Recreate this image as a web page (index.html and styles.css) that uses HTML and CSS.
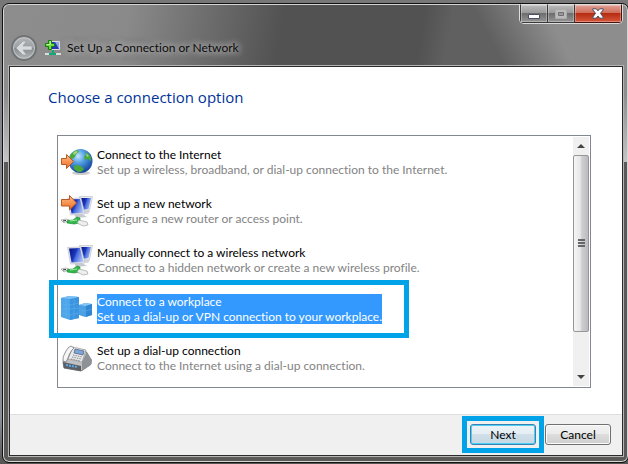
FILE: index.html
```html
<!DOCTYPE html>
<html lang="en">
<head>
  <meta charset="UTF-8">
  <meta name="viewport" content="width=device-width, initial-scale=1.0">
  <title>Set Up a Connection or Network</title>
  <link rel="stylesheet" href="styles.css">
</head>
<body>
  <div class="window">
    <header class="titlebar">
      <button class="back" type="button" aria-label="Back">
        <svg width="18" height="16" viewBox="0 0 18 16"><path d="M1 8 8 1h3.500L8 6h9v4H8l3.500 5H8z" fill="#d8dadc" stroke="#94989b" stroke-width=".6"/></svg>
      </button>
      <svg class="app-icon" width="16" height="18" viewBox="0 0 16 18">
        <path d="M5 2h10v9H5z" fill="#f2f2f2" stroke="#999" stroke-width=".5"/>
        <path d="M6 3h8v7H6z" fill="#2536b8"/>
        <path d="M10 3h4v7z" fill="#8fa6ee"/>
        <path d="M0 14h16v2H0z" fill="#d9e0dc"/>
        <path d="M4 14h7v2H4zM7 11h2v4H7z" fill="#12a878"/>
        <path d="M3.500 1.500h3v3h3v3h-3v3h-3v-3h-3v-3h3z" fill="#6fdc3f" stroke="#157a10"/>
        <path d="M4.500 2.500h1v3h-4" fill="none" stroke="#b9f29a"/>
      </svg>
      <h1 class="title">Set Up a Connection or Network</h1>
      <div class="caption">
        <button class="min" type="button" aria-label="Minimize">
          <svg width="14" height="8" viewBox="0 0 14 8"><path d="M1.500 2.500h11v4h-11z" fill="#fff" stroke="#4c5062"/></svg>
        </button>
        <button class="max" type="button" aria-label="Maximize" disabled>
          <svg width="12" height="10" viewBox="0 0 12 10"><path d="M.5.5h11v9H.5z" fill="#bbb" stroke="#aaa"/><path d="M3.500 3.500h5v3h-5z" fill="#999" stroke="#6d6d6d"/></svg>
        </button>
        <button class="close" type="button" aria-label="Close">
          <svg width="12" height="11" viewBox="0 0 12 11"><path d="M.8.8h3.500L6 2.800 7.700.8h3.500v1L8.500 5.300l2.700 3.700v1.200H7.700L6 8 4.300 10.200H.8V9l2.700-3.700L.8 1.800z" fill="#fff" stroke="#4c4a5c"/></svg>
        </button>
      </div>
    </header>

    <main class="client">
      <section class="content">
        <h2 class="heading" id="heading">Choose a connection option</h2>
        <div class="listbox">
          <ul class="options" role="listbox" aria-labelledby="heading">
            <li class="option" role="option">
              <svg class="icon" width="32" height="32" viewBox="0 0 32 32">
                <defs>
                  <radialGradient id="sea" cx=".4" cy=".3" r=".75"><stop offset="0" stop-color="#c4e6ff"/><stop offset=".4" stop-color="#4f9de2"/><stop offset="1" stop-color="#0c3c91"/></radialGradient>
                  <linearGradient id="arrow" x1="0" y1="0" x2="0" y2="1"><stop offset="0" stop-color="#ffbf8c"/><stop offset="1" stop-color="#f0691c"/></linearGradient>
                </defs>
                <ellipse cx="20" cy="27" rx="9" ry="2" fill="#ccc"/>
                <circle cx="19.500" cy="15" r="12" fill="url(#sea)"/>
                <path d="M10 8q3-3 7-4l1 2-3 2-1 3-3 2-3-1zM24 6q5 2 6 6v3l-3-2-3 1-1-3 2-2zM13 20l4-1 4 2 2 2-3 3h-3l-4-3z" fill="#4ba83a"/>
                <path d="M12 7q2-2 4-2l1 1-4 3zM25 7l3 3-2 1z" fill="#a5db7c"/>
                <path d="M.5 12.500h5v-4l7 7-7 7v-4h-5z" fill="url(#arrow)" stroke="#b85a24"/>
              </svg>
              <div class="label"><p>Connect to the Internet</p><p class="info">Set up a wireless, broadband, or dial-up connection to the Internet.</p></div>
            </li>
            <li class="option" role="option">
              <svg class="icon" width="32" height="32" viewBox="0 0 32 32">
                <defs>
                  <linearGradient id="screen" x1="0" y1=".3" x2="1" y2=".7"><stop offset="0" stop-color="#0b1a8c"/><stop offset=".4" stop-color="#1c37bd"/><stop offset=".5" stop-color="#4468dc"/><stop offset="1" stop-color="#b3c6f8"/></linearGradient>
                </defs>
                <g id="monitors">
                  <path d="M21 15l8 1-2 3-7-1z" fill="#d4d6da"/>
                  <path d="M18.500 1.500h13l-3 14-9 1z" fill="#e7e9ee" stroke="#b9bcc4" stroke-width=".6"/>
                  <path d="M20 3h10l-2.500 11L21 15z" fill="url(#screen)"/>
                  <path d="M13 19h8l5 3-11 1z" fill="#c6c9cf"/>
                  <path d="M6.500 3.500 20 3l4 16-14.500 1z" fill="#e7e9ee" stroke="#b9bcc4" stroke-width=".6"/>
                  <path d="M8 4.500l11-.5 3.500 14-12 .5z" fill="url(#screen)"/>
                  <path d="M0 25l5-1 3 1-5 3z" fill="#fafafa" stroke="#888" stroke-width=".6"/>
                  <path d="M2 26l3-.5" stroke="#222"/>
                  <path d="M6 26q2-1 6-1l4-3 3 1v5l-6 1-7-1z" fill="#2fb84a" stroke="#14872b" stroke-width=".6"/>
                  <path d="M9 26l7-1" stroke="#a4eaa9"/>
                  <path d="M18 25l8 2 1 3-5 1-6-3z" fill="#eee" stroke="#999" stroke-width=".6"/>
                </g>
                <path d="M.5 4.500h8v-4l7 7.500-7 7v-4h-8z" fill="url(#arrow)" stroke="#b85a24"/>
              </svg>
              <div class="label"><p>Set up a new network</p><p class="info">Configure a new router or access point.</p></div>
            </li>
            <li class="option" role="option">
              <svg class="icon" width="32" height="32" viewBox="0 0 32 32"><use href="#monitors"/></svg>
              <div class="label"><p>Manually connect to a wireless network</p><p class="info">Connect to a hidden network or create a new wireless profile.</p></div>
            </li>
            <li class="option selected" role="option" aria-selected="true">
              <svg class="icon" width="32" height="32" viewBox="0 0 32 32">
                <path d="M0 5l8-2 10 1v21l-9 2-9-3z" fill="#4ea6ea"/>
                <path d="M0 5l8-2 10 1-8 2z" fill="#7cc1f5"/>
                <path d="M9 6l9-2v21l-9 2z" fill="#3a94df"/>
                <path d="M0 11l9 1 9-2M0 16h9l9-1M0 20l9 2 9-2M5 5.500v20M13 5v21" fill="none" stroke="#63b3ef" stroke-width=".5"/>
                <path d="M18 12l6-2 7 1v11l-7 2-6-2z" fill="#4b9fe2"/>
                <path d="M18 12l6-2 7 1-6 2z" fill="#86c6f4"/>
                <path d="M25 13l6-2v11l-6 2z" fill="#2f87d3"/>
                <path d="M18 17l7 1 6-2" fill="none" stroke="#63b3ef" stroke-width=".5"/>
              </svg>
              <div class="label"><p>Connect to a workplace</p><p class="info">Set up a dial-up or VPN connection to your workplace.</p></div>
            </li>
            <li class="option" role="option">
              <svg class="icon" width="32" height="32" viewBox="0 0 32 32">
                <path d="M2 20 10 6l14 2 6 10v4l-10 7-17-3z" fill="#bfc1c4" stroke="#77797c"/>
                <path d="M12 5l13 3-4 12-14-3z" fill="#e8eaec" stroke="#999" stroke-width=".7"/>
                <path d="M14 7l9 2-1 4-9-2z" fill="#79a9d9" stroke="#557" stroke-width=".7"/>
                <path d="M12 13l9 2M11 15l9 2M10 17l9 2" stroke="#888" stroke-dasharray="1.500 1"/>
                <path d="M2 19Q1 15 5 9q2-4 5-5l3 2-2 2q-3 4-4 8l-2 4z" fill="#f6f6f6" stroke="#77797c" stroke-width=".8"/>
                <path d="M21 20l5-10 5 8-1 5-9 6z" fill="#8e9195"/>
                <path d="M2 20l18 4v5L3 26z" fill="#5b5e62"/>
                <path d="M5 23l11 2" stroke="#5aa9ec" stroke-width="2" stroke-dasharray="2 1"/>
              </svg>
              <div class="label"><p>Set up a dial-up connection</p><p class="info">Connect to the Internet using a dial-up connection.</p></div>
            </li>
          </ul>
          <div class="scrollbar">
            <button class="arrow" type="button" aria-label="Scroll up"><svg width="8" height="4" viewBox="0 0 8 4"><path d="M0 4 4 0l4 4z" fill="#444"/></svg></button>
            <div class="track"><div class="thumb"><span></span><span></span><span></span></div></div>
            <button class="arrow" type="button" aria-label="Scroll down"><svg width="8" height="4" viewBox="0 0 8 4"><path d="M0 0h8L4 4z" fill="#444"/></svg></button>
          </div>
        </div>
      </section>
      <footer class="footer">
        <div class="marked"><button class="btn default" type="button">Next</button></div>
        <button class="btn" type="button">Cancel</button>
      </footer>
    </main>
  </div>
</body>
</html>
```
FILE: styles.css
```css
*, *::after {
  margin: 0;
  padding: 0;
  box-sizing: border-box;
}
body {
  height: 100vh;
  padding: 3px 0 1px 2px;
  overflow: hidden;
  display: flex;
  background: linear-gradient(#777, #85888f 30%, #8a8f98 90%, #555);
  font-family: Lato, "Open Sans", sans-serif;
  font-size: 12px;
  line-height: 15px;
  font-variant-ligatures: none;
  color: #000;
}
button {
  font: inherit;
}
svg {
  display: block;
}
.window {
  flex: 1;
  display: flex;
  flex-direction: column;
  margin-right: -1px;
  padding: 0 5px 6px 6px;
  border: 1px solid #111;
  border-radius: 7px;
  box-shadow: inset 0 0 0 1px #d5d5d5;
  background:
    linear-gradient(transparent 90px, #c4c4c4 158px, #5b5a58 158px),
    linear-gradient(62deg, transparent 82%, #8d8d8d 90%),
    linear-gradient(100deg, #8d8d8d, #8a8a8a 18%, #525252 40%, #525252 60%, #606060 64%, #606060 100%);
}

/* title bar */
.titlebar {
  display: flex;
  align-items: center;
  height: 62px;
  padding: 25px 0 0 2px;
  position: relative;
}
.back {
  width: 26px;
  height: 26px;
  display: flex;
  align-items: center;
  justify-content: center;
  border: 2px solid #6f7376;
  border-radius: 50%;
  background: linear-gradient(#b5b8ba, #9b9fa1 50%, #868a8d 50%, #b2b6b9);
  box-shadow: inset 0 0 0 1px #c4c4c4;
}
.app-icon {
  margin-left: 8px;
}
.title {
  margin-left: 6px;
  font-size: 12px;
  font-weight: normal;
  color: #0c0c0c;
  text-shadow: 0 0 6px #bbb, 0 0 8px #aaa, 0 0 10px #999, 0 0 12px #999;
}
.caption {
  position: absolute;
  top: 0;
  right: 0;
  display: flex;
  border: 1px solid #ddd;
  border-top: 0;
  border-radius: 0 0 5px 5px;
  overflow: hidden;
}
.caption button {
  width: 27px;
  height: 19px;
  display: flex;
  align-items: center;
  justify-content: center;
  border: 1px solid #3a3a3a;
  border-top-color: #ddd;
  border-left: 0;
  background: linear-gradient(#bababa, #989898 50%, #6e6e6e 50%, #959595);
  box-shadow: inset 0 0 0 1px rgba(255, 255, 255, 0.3);
}
.caption .min {
  width: 28px;
  padding-top: 4px;
  border-left: 1px solid #3a3a3a;
}
.caption .close {
  width: 47px;
  border-color: #ddd #4a120c #4a120c;
  background: linear-gradient(#dfa196, #cf6c58 48%, #b62c12 50%, #d7573a);
}

/* client area */
.client {
  flex: 1;
  display: flex;
  flex-direction: column;
  border: 1px solid #2b2b2b;
  outline: 1px solid #b5b5b5;
  background: #fff;
}
.content {
  flex: 1;
  padding: 19px 31px 0 38px;
}
.heading {
  font-family: "Open Sans", "Noto Sans", sans-serif;
  font-size: 15px;
  line-height: 22px;
  font-weight: normal;
  color: #003399;
}
.listbox {
  display: flex;
  height: 253px;
  margin: 27px 0 0 9px;
  padding: 1px;
  border: 1px solid #828790;
}
.options {
  flex: 1;
  display: flex;
  flex-direction: column;
  gap: 17px;
  padding: 9px 0 0 2px;
  list-style: none;
}
.option {
  position: relative;
  display: flex;
  align-items: center;
  gap: 4px;
  height: 32px;
}
.info {
  color: #838383;
}
.selected .label,
.selected .info {
  background: #3399ff;
  color: #fff;
}
.selected::after {
  content: "";
  position: absolute;
  top: -13px;
  left: -12px;
  width: 360px;
  height: 58px;
  border: 5px solid #00a2e8;
}

/* scroll bar */
.scrollbar {
  width: 16px;
  display: flex;
  flex-direction: column;
  background: #f0f0f0;
}
.arrow {
  height: 18px;
  display: flex;
  align-items: center;
  justify-content: center;
  border: 0;
  background: none;
}
.track {
  flex: 1;
}
.thumb {
  height: 83%;
  display: flex;
  flex-direction: column;
  align-items: center;
  justify-content: center;
  gap: 1px;
  border: 1px solid #979797;
  border-radius: 2px;
  background: linear-gradient(90deg, #f5f5f5, #e6e6e8 45%, #cfcfd2 55%, #bbbbc0);
}
.thumb span {
  width: 7px;
  height: 2px;
  background: #666;
}

/* footer */
.footer {
  display: flex;
  justify-content: flex-end;
  align-items: center;
  gap: 1px;
  height: 41px;
  padding: 0 11px 1px 0;
  border-top: 1px solid #dfdfdf;
  background: #f0f0f0;
}
.marked {
  padding: 3px;
  border: 5px solid #00a2e8;
}
.btn {
  display: block;
  width: 66px;
  height: 21px;
  border: 1px solid #707070;
  border-radius: 3px;
  background: linear-gradient(#f2f2f2, #ebebeb 50%, #dddddd 50%, #cfcfcf);
  box-shadow: inset 0 0 0 1px #fbfbfb;
}
.btn.default {
  border-color: #3c7fb1;
  background: linear-gradient(#eef4f8, #e3edf3 50%, #d0dfe8 50%, #c5d8e4);
  box-shadow: inset 0 0 0 1px #48d1f5;
}
```
